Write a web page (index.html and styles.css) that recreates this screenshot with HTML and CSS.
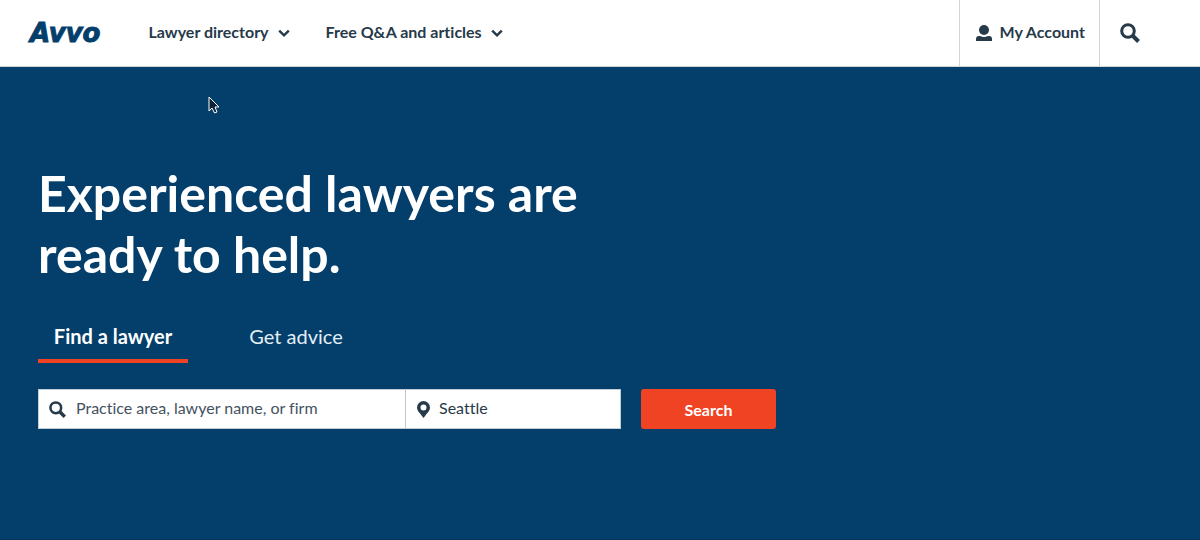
FILE: index.html
```html
<!DOCTYPE html>
<html lang="en">
    <head>
        <meta charset="UTF-8">
        <meta name="viewport" content="width=device-width, initial-scale=1.0">
        <title>Avvo</title>
        <link rel="stylesheet" href="styles.css">
    </head>
    <body>
        <header class="header">
            <a class="logo" href="#">Avvo</a>
            <nav class="nav">
                <button class="nav-item" type="button">Lawyer directory
                    <svg class="chevron" viewBox="0 0 10 8"><path d="M1 2l4 4 4-4"/></svg>
                </button>
                <button class="nav-item" type="button">Free Q&amp;A and articles
                    <svg class="chevron" viewBox="0 0 10 8"><path d="M1 2l4 4 4-4"/></svg>
                </button>
            </nav>
            <a class="account" href="#">
                <svg class="user" viewBox="0 0 16 16"><circle cx="8" cy="5" r="5"/><path d="M0 16v-2c0-2 1-3 3-3h1c2.500 1.300 5.500 1.300 8 0h1c2 0 3 1 3 3v2z"/></svg>
                My Account
            </a>
            <button class="header-search" type="button" aria-label="Search">
                <svg class="glass" viewBox="0 0 20 20"><circle cx="8" cy="8" r="6.300"/><path class="handle" d="M13 13l5.500 5.500"/></svg>
            </button>
        </header>
        <main class="hero">
            <h1>Experienced lawyers are<br>ready to help.</h1>
            <div class="tabs">
                <button class="tab active" type="button">Find a lawyer</button>
                <button class="tab" type="button">Get advice</button>
            </div>
            <form class="search">
                <div class="fields">
                    <label class="field field-query">
                        <svg class="glass" viewBox="0 0 20 20"><circle cx="8" cy="8" r="6.300"/><path class="handle" d="M13 13l5.500 5.500"/></svg>
                        <input type="text" placeholder="Practice area, lawyer name, or firm" aria-label="Practice area, lawyer name, or firm">
                    </label>
                    <label class="field field-place">
                        <svg class="pin" viewBox="0 0 13 17"><path fill-rule="evenodd" d="M6.500 0A6.500 6.500 0 0 0 0 6.500C0 10 3.500 12.500 6.500 17 9.500 12.500 13 10 13 6.500A6.500 6.500 0 0 0 6.500 0zm0 3.500a3 3 0 1 1 0 6 3 3 0 0 1 0-6z"/></svg>
                        <input type="text" value="Seattle" aria-label="Location">
                    </label>
                </div>
                <button class="btn" type="submit">Search</button>
            </form>
        </main>
        <svg class="cursor" viewBox="0 0 12 18"><path d="M1 1v14l3-3 2.500 5 2.500-1-2-5h4z"/></svg>
    </body>
</html>
```

FILE: styles.css
```css
:root{
    --navy: #043e6b;
    --ink: #263a4a;
    --orange: #ef4323;
    --line: #d3d5d7;
}
*{
    padding: 0;
    margin: 0;
    box-sizing: border-box;
}
body{
    min-height: 100vh;
    display: flex;
    flex-direction: column;
    font-family: Lato, "Open Sans", sans-serif;
    font-size: 16px;
    font-variant-ligatures: none;
    color: var(--ink);
    background: #fff;
}
button, input{font: inherit; font-variant-ligatures: none; color: inherit; background: none; border: none;}
a{color: inherit; text-decoration: none;}
button{cursor: pointer;}
.header{
    display: flex;
    height: 67px;
    padding: 0 32px 0 30px;
    border-bottom: 1px solid var(--line);
    font-weight: 700;
}
.logo{
    align-self: center;
    font-family: "DejaVu Sans", sans-serif;
    font-size: 26px;
    font-weight: 700;
    font-style: italic;
    color: var(--navy);
    -webkit-text-stroke: 1px var(--navy);
}
.nav{display: flex; gap: 36px; margin-left: 48px; margin-right: auto;}
.nav-item{display: flex; align-items: center; gap: 9px; padding-bottom: 4px;}
.chevron{width: 12px; height: 10px; margin-top: 4px; fill: none; stroke: currentColor; stroke-width: 2;}
.account{
    display: flex;
    align-items: center;
    gap: 8px;
    padding: 0 14px 4px 16px;
    border-left: 1px solid var(--line);
    border-right: 1px solid var(--line);
}
.user{width: 16px; height: 16px; margin-top: 4px; fill: currentColor;}
.header-search{padding: 0 28px 0 20px; display: flex; align-items: center;}
.glass{width: 20px; height: 20px; fill: none; stroke: currentColor; stroke-width: 3; flex: none;}
.glass .handle{stroke-width: 4;}
.hero{
    flex: 1;
    padding: 96px 38px 40px;
    color: #fff;
    background: var(--navy);
    border-bottom: 1px solid #073458;
}
h1{font-family: Lato, sans-serif; font-size: 50px; line-height: 61px; font-weight: 700;}
.tabs{display: flex; gap: 33px; margin-top: 30px;}
.tab{width: 150px; padding: 8px 0 10px; font-size: 20px; line-height: 26px; border-bottom: 4px solid transparent; color: #e3eef5;}
.tab.active{font-weight: 700; color: #fff; border-color: var(--orange);}
.search{display: flex; align-items: center; gap: 20px; margin-top: 26px;}
.fields{display: flex; flex: 0 1 583px; height: 40px; background: #fff; border: 1px solid #c3ccd3;}
.field{display: flex; align-items: center; color: var(--ink);}
.field input{flex: 1; min-width: 0; height: 36px; padding-bottom: 4px; outline: none;}
.field input::placeholder{color: #44525f; opacity: 1;}
.field-query{flex: 0 0 63%; padding-left: 10px; gap: 10px;}
.field-query .glass{width: 17px; height: 17px;}
.field-place{flex: 1; min-width: 0; padding-left: 11px; gap: 9px; border-left: 1px solid #c3c6c9;}
.pin{width: 13px; height: 17px; fill: currentColor;}
.btn{width: 135px; height: 40px; color: #fff; background: var(--orange); border-radius: 3px; font-weight: 700;}
.cursor{
    position: absolute;
    left: 208px;
    top: 96px;
    width: 12px;
    height: 18px;
    fill: #0b2238;
    stroke: #fff;
    stroke-width: 1;
}
```
